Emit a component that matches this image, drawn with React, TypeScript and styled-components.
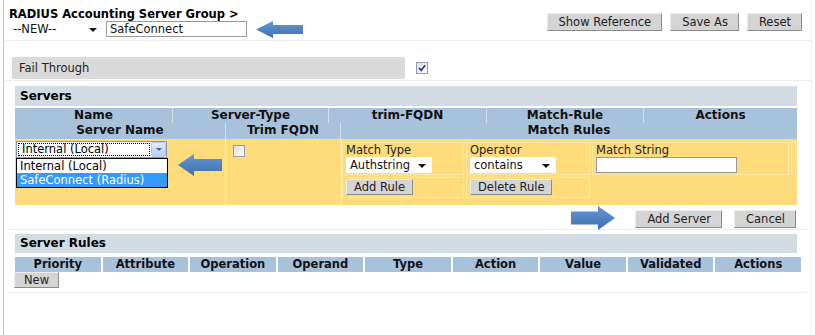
import React from "react";
import styled, { createGlobalStyle } from "styled-components";

const GlobalStyle = createGlobalStyle`
  html, body {
    margin: 0;
    padding: 0;
    background: #ffffff;
  }
  body {
    font-family: "DejaVu Sans", Verdana, sans-serif;
    font-size: 11.5px;
    color: #222222;
  }
`;

type ArrowProps = {
  dir: "left" | "right";
  w: number;
  h: number;
  head: number;
  shaft: number;
  className?: string;
};

const ArrowSvg: React.FC<ArrowProps> = ({ dir, w, h, head, shaft, className }) => {
  const t = (h - shaft) / 2;
  const b = (h + shaft) / 2;
  const pts = `0,${h / 2} ${head},0 ${head},${t} ${w},${t} ${w},${b} ${head},${b} ${head},${h}`;
  const id = `grad-${dir}-${w}-${h}`;
  return (
    <svg className={className} width={w} height={h} viewBox={`0 0 ${w} ${h}`}>
      <defs>
        <linearGradient id={id} x1="0" y1="0" x2="0" y2="1">
          <stop offset="0" stopColor="#6797d3" />
          <stop offset="1" stopColor="#3d6fb0" />
        </linearGradient>
      </defs>
      <polygon
        points={pts}
        fill={`url(#${id})`}
        transform={dir === "right" ? `translate(${w},0) scale(-1,1)` : undefined}
      />
    </svg>
  );
};

const Arrow = styled(ArrowSvg)<{ $mt?: number; $ml?: number; $mr?: number }>`
  display: block;
  flex: none;
  margin-top: ${(p) => p.$mt ?? 0}px;
  margin-left: ${(p) => p.$ml ?? 0}px;
  margin-right: ${(p) => p.$mr ?? 0}px;
`;

const Page = styled.div`
  margin-left: 3px;
  width: 809px;
  height: 335px;
  box-sizing: border-box;
  border-left: 1px solid #c9c9c9;
  border-right: 1px solid #f0f0f0;
  overflow: hidden;
`;

const Top = styled.div`
  display: flex;
  justify-content: space-between;
  align-items: flex-start;
  height: 41px;
  box-sizing: border-box;
  padding: 7px 9px 0 5px;
  border-bottom: 1px solid #ededed;
`;

const Title = styled.div`
  font-weight: bold;
  font-size: 11.5px;
  line-height: 14px;
  color: #000;
`;

const Controls = styled.div`
  display: flex;
  align-items: center;
  height: 16px;
`;

const PlainSelect = styled.div<{ $w: number }>`
  position: relative;
  width: ${(p) => p.$w}px;
  height: 16px;
  box-sizing: border-box;
  background: #ffffff;
  padding-left: 4px;
  line-height: 16px;
  color: #111;
  flex: none;

  &::after {
    content: "";
    position: absolute;
    right: 6px;
    top: 7px;
    border-left: 4px solid transparent;
    border-right: 4px solid transparent;
    border-top: 4px solid #111;
  }
`;

const TextInput = styled.div<{ $w: number; $ml?: number }>`
  width: ${(p) => p.$w}px;
  height: 16px;
  margin-left: ${(p) => p.$ml ?? 0}px;
  box-sizing: border-box;
  border: 1px solid #9a9a9a;
  background: #fff;
  padding-left: 3px;
  line-height: 14px;
  color: #111;
  flex: none;
`;

const ButtonGroup = styled.div`
  display: flex;
  gap: 8px;
  margin-top: 6px;
`;

const Button = styled.button`
  height: 18px;
  box-sizing: border-box;
  padding: 0 10px 0 11px;
  margin: 0;
  font-family: "DejaVu Sans", Verdana, sans-serif;
  font-size: 11.5px;
  line-height: 16px;
  color: #222;
  background: #d4d4d4;
  border: 1px solid;
  border-color: #ececec #8c8c8c #8c8c8c #ececec;
  border-radius: 0;
  flex: none;
`;

const SmallButton = styled(Button)`
  height: 16px;
  line-height: 14px;
  padding: 0 7px;
`;

const FailRow = styled.div`
  display: flex;
  align-items: center;
  gap: 11px;
  height: 40px;
  box-sizing: border-box;
  padding: 16px 0 1px 8px;
  border-bottom: 1px solid #ededed;
`;

const FailBar = styled.div`
  width: 393px;
  height: 22px;
  background: #dadada;
  padding-left: 7px;
  box-sizing: border-box;
  line-height: 22px;
  color: #222;
`;

const Check = styled.span`
  display: block;
  width: 12px;
  height: 12px;
  box-sizing: border-box;
  border: 1px solid #8e9bb2;
  background: linear-gradient(135deg, #dcdde2, #ffffff);
  flex: none;

  svg {
    display: block;
  }
`;

const Section = styled.div<{ $mt: number }>`
  width: 786px;
  margin: ${(p) => p.$mt}px 0 0 11px;
`;

const SectionBar = styled.div<{ $mr: number; $h: number }>`
  height: ${(p) => p.$h}px;
  margin-right: ${(p) => p.$mr}px;
  background: #d3dbe3;
  padding-left: 5px;
  font-weight: bold;
  font-size: 12px;
  line-height: ${(p) => p.$h}px;
  color: #000;
`;

const ServerTable = styled.div`
  margin: 2px 4px 0 0;
`;

const HeadRow = styled.div<{ $cols: string; $h: number }>`
  display: grid;
  grid-template-columns: ${(p) => p.$cols};
  height: ${(p) => p.$h}px;
  background: #a9c2dc;
`;

const HeadCell = styled.div`
  font-weight: bold;
  font-size: 12px;
  line-height: 15px;
  text-align: center;
  color: #111;
  white-space: nowrap;

  & + & {
    border-left: 1px solid #d6e0ec;
  }
`;

const Body = styled.div`
  display: grid;
  grid-template-columns: 210px 115px 1fr;
  column-gap: 1px;
  height: 66px;
  background: #fff4d4;
`;

const BodyCell = styled.div<{ $pad: string }>`
  background: #fedb7b;
  padding: ${(p) => p.$pad};
`;

const XPSelect = styled.div`
  display: flex;
  width: 151px;
  height: 17px;
  box-sizing: border-box;
  border: 1px solid #7f9db9;
  background: #fff;
`;

const XPText = styled.div`
  flex: 1;
  margin: 1px;
  border: 1px dotted #000;
  padding-left: 3px;
  line-height: 11px;
  color: #000;
  white-space: nowrap;
`;

const XPButton = styled.div`
  width: 15px;
  height: 15px;
  box-sizing: border-box;
  border: 1px solid #b3c7ee;
  border-radius: 2px;
  background: linear-gradient(#e0eafd, #b7cdf6);
  display: flex;
  align-items: center;
  justify-content: center;

  &::after {
    content: "";
    border-left: 3px solid transparent;
    border-right: 3px solid transparent;
    border-top: 3px solid #4d6185;
  }
`;

const OpenRow = styled.div`
  display: flex;
  align-items: flex-start;
`;

const OptionList = styled.div`
  width: 152px;
  border: 1px solid #000;
  background: #fff;
  box-sizing: border-box;
`;

const Option = styled.div<{ $selected?: boolean }>`
  height: 14px;
  line-height: 14px;
  padding-left: 3px;
  white-space: nowrap;
  color: ${(p) => (p.$selected ? "#ffffff" : "#000000")};
  background: ${(p) => (p.$selected ? "#3399ff" : "transparent")};
`;

const RuleGrid = styled.div`
  display: grid;
  grid-template-columns: 122px 124px 197px 5px;
  grid-template-rows: 33px 21px;
  gap: 2px;
`;

const RuleCell = styled.div<{ $span?: number; $bare?: boolean }>`
  grid-column: span ${(p) => p.$span ?? 1};
  box-sizing: border-box;
  border: 1px solid ${(p) => (p.$bare ? "transparent" : "#fbe7a6")};
  padding: 1px 0 0 3px;
  display: flex;
  flex-direction: column;
  align-items: flex-start;
`;

const Label = styled.div`
  line-height: 13px;
  color: #222;
`;

const Actions = styled.div`
  display: flex;
  justify-content: flex-end;
  align-items: center;
  height: 18px;
  gap: 12px;
  margin: 5px 5px 0 0;
`;

const Divider = styled.div<{ $mt: number }>`
  height: 1px;
  margin: ${(p) => p.$mt}px 4px 0 4px;
  background: #ededed;
`;

const RulesHead = styled.div`
  display: grid;
  grid-template-columns: repeat(9, 1fr);
  column-gap: 2px;
  height: 15px;
  margin-top: 4px;
  background: #ffffff;
`;

const RulesHeadCell = styled.div`
  background: #a9c2dc;
  font-weight: bold;
  font-size: 11.5px;
  line-height: 15px;
  text-align: center;
  color: #111;
`;

const NewButton = styled(SmallButton)`
  margin-left: -1px;
  display: block;
  padding: 0 9px;
`;

const CheckBox: React.FC<{ checked?: boolean }> = ({ checked }) => (
  <Check>
    {checked && (
      <svg width="10" height="10" viewBox="0 0 10 10">
        <path d="M2 4.8 L4.2 7.4 L8.2 2.2" fill="none" stroke="#34458a" strokeWidth="1.8" />
      </svg>
    )}
  </Check>
);

const ruleCols = ["Priority", "Attribute", "Operation", "Operand", "Type", "Action", "Value", "Validated", "Actions"];

const App: React.FC = () => {
  return (
    <>
      <GlobalStyle />
      <Page>
        <Top>
          <div>
            <Title>RADIUS Accounting Server Group &gt;</Title>
            <Controls>
              <PlainSelect $w={94}>--NEW--</PlainSelect>
              <TextInput $w={141} $ml={3}>SafeConnect</TextInput>
              <Arrow dir="left" w={47} h={17} head={17} shaft={9} $ml={9} />
            </Controls>
          </div>
          <ButtonGroup>
            <Button>Show Reference</Button>
            <Button>Save As</Button>
            <Button>Reset</Button>
          </ButtonGroup>
        </Top>

        <FailRow>
          <FailBar>Fail Through</FailBar>
          <CheckBox checked />
        </FailRow>

        <Section $mt={5}>
          <SectionBar $mr={4} $h={20}>Servers</SectionBar>
          <ServerTable>
            <HeadRow $cols="157px 156px 158px 157px 1fr" $h={15}>
              <HeadCell>Name</HeadCell>
              <HeadCell>Server-Type</HeadCell>
              <HeadCell>trim-FQDN</HeadCell>
              <HeadCell>Match-Rule</HeadCell>
              <HeadCell>Actions</HeadCell>
            </HeadRow>
            <HeadRow $cols="210px 115px 1fr" $h={16}>
              <HeadCell>Server Name</HeadCell>
              <HeadCell>Trim FQDN</HeadCell>
              <HeadCell>Match Rules</HeadCell>
            </HeadRow>
            <Body>
              <BodyCell $pad="2px 0 0 1px">
                <XPSelect>
                  <XPText>Internal (Local)</XPText>
                  <XPButton />
                </XPSelect>
                <OpenRow>
                  <OptionList>
                    <Option>Internal (Local)</Option>
                    <Option $selected>SafeConnect (Radius)</Option>
                  </OptionList>
                  <Arrow dir="left" w={44} h={22} head={16} shaft={12} $ml={10} $mt={-4} />
                </OpenRow>
              </BodyCell>
              <BodyCell $pad="6px 0 0 7px">
                <CheckBox />
              </BodyCell>
              <BodyCell $pad="3px 0 0 0">
                <RuleGrid>
                  <RuleCell>
                    <Label>Match Type</Label>
                    <PlainSelect $w={86}>Authstring</PlainSelect>
                  </RuleCell>
                  <RuleCell>
                    <Label>Operator</Label>
                    <PlainSelect $w={86}>contains</PlainSelect>
                  </RuleCell>
                  <RuleCell>
                    <Label>Match String</Label>
                    <TextInput $w={141} />
                  </RuleCell>
                  <RuleCell />
                  <RuleCell>
                    <SmallButton>Add Rule</SmallButton>
                  </RuleCell>
                  <RuleCell>
                    <SmallButton>Delete Rule</SmallButton>
                  </RuleCell>
                  <RuleCell $span={2} $bare />
                </RuleGrid>
              </BodyCell>
            </Body>
          </ServerTable>
          <Actions>
            <Arrow dir="right" w={44} h={24} head={17} shaft={13} $mr={8} $mt={-3} />
            <Button>Add Server</Button>
            <Button>Cancel</Button>
          </Actions>
        </Section>

        <Divider $mt={1} />

        <Section $mt={4}>
          <SectionBar $mr={4} $h={19}>Server Rules</SectionBar>
          <RulesHead>
            {ruleCols.map((c) => (
              <RulesHeadCell key={c}>{c}</RulesHeadCell>
            ))}
          </RulesHead>
          <NewButton>New</NewButton>
        </Section>

        <Divider $mt={4} />
      </Page>
    </>
  );
};

export default App;
